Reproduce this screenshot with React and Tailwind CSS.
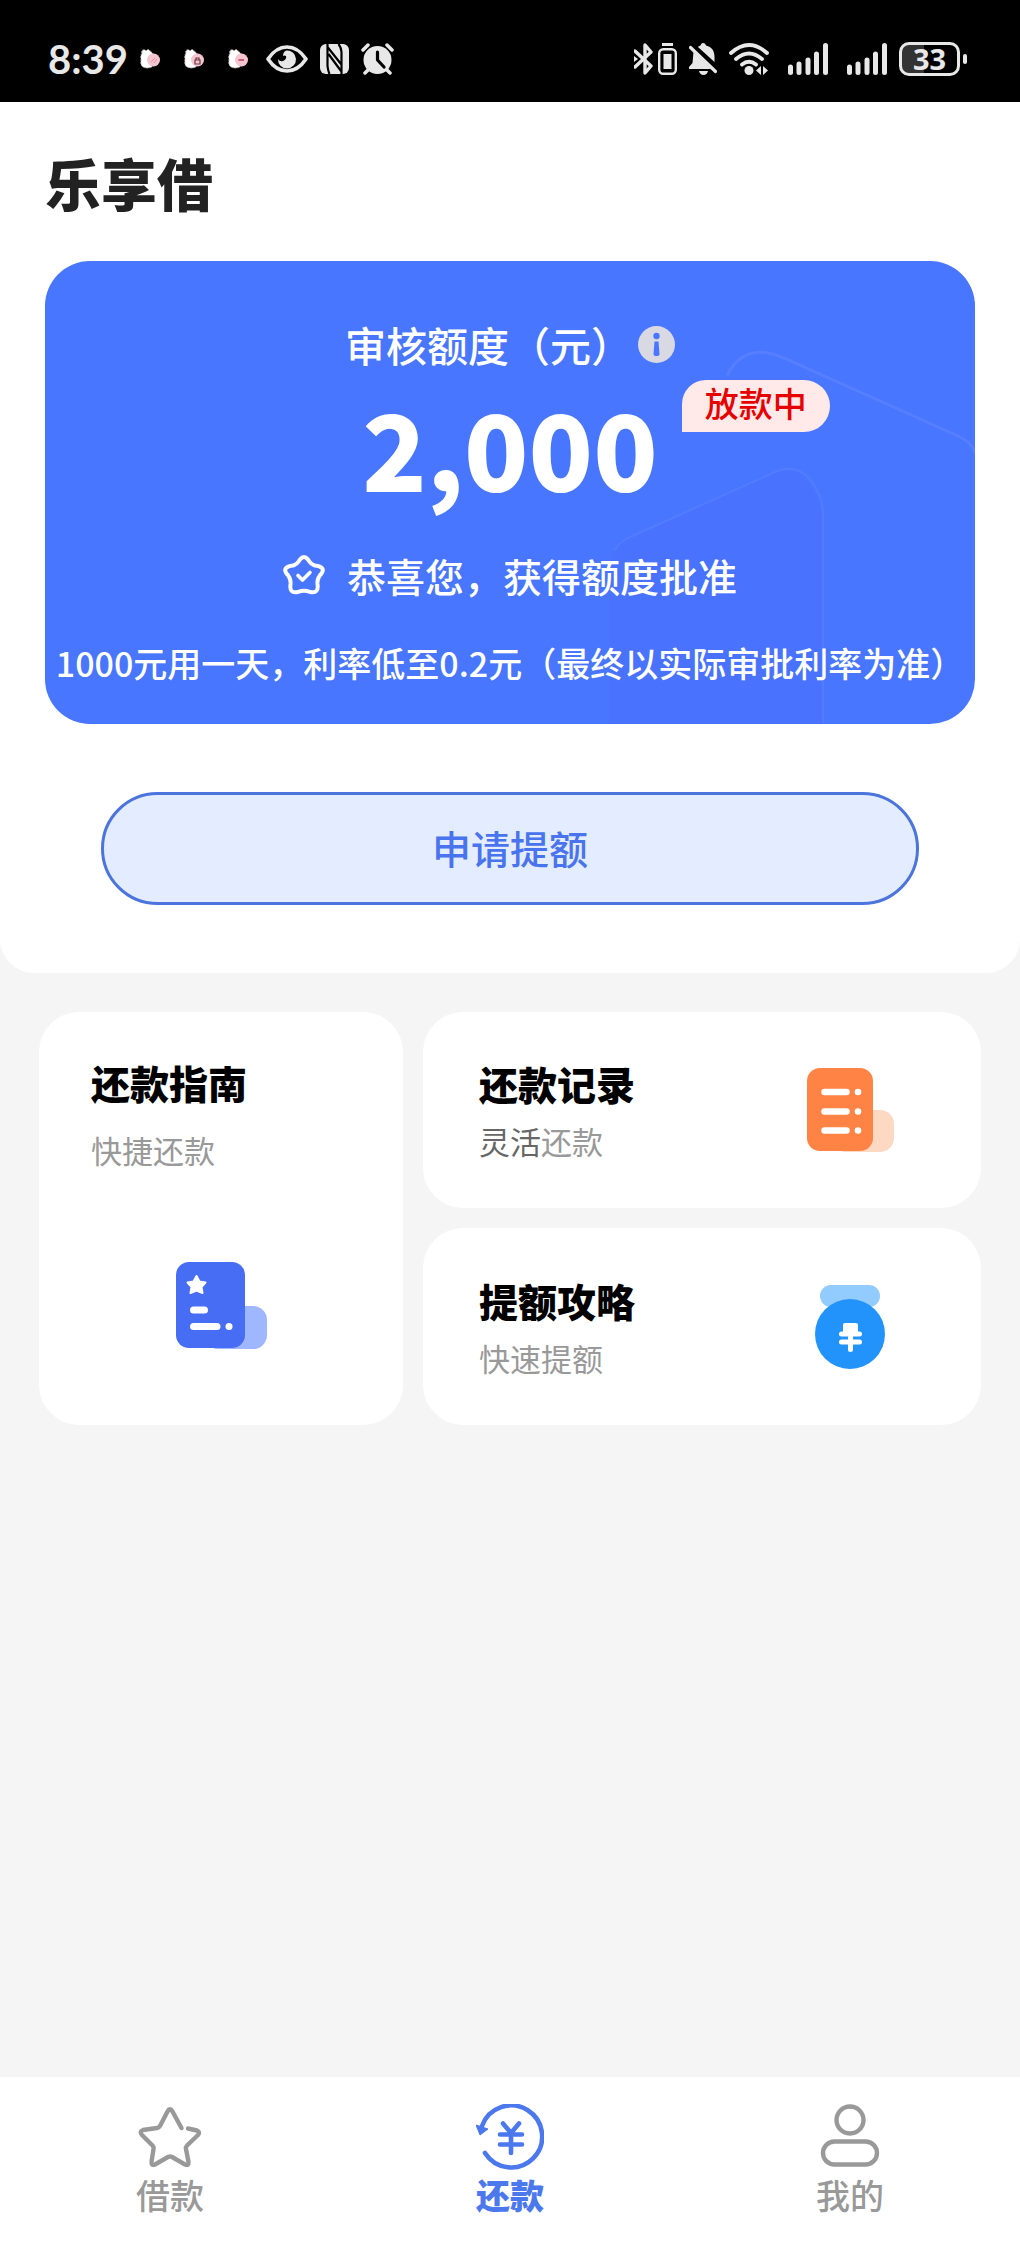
import React, { useState } from 'react'

const Sticker = ({ mark }) => (
  <svg className="w-5 h-6" viewBox="0 0 20 24" aria-hidden="true">
    <path d="M2 6 Q1 4 3 3 Q5 2 6 4 Q8 1 10 4 Q12 5 13 7 L12 20 Q7 22 3 20 Q0 18 1 13 Q0 9 2 6 Z" fill="#fff" stroke="#b9a3a6" strokeWidth="1" strokeDasharray="2 1" />
    <circle cx="13.500" cy="13" r="6.500" fill="#f6c6d0" />
    {mark === 'lock' && <path d="M11 13h5v4h-5z M12 13v-2h3v2" fill="none" stroke="#6b3a46" strokeWidth="1.200" />}
    {mark === 'dash' && <path d="M10.500 13h5.500" stroke="#c0455f" strokeWidth="1.600" />}
    {mark === 'dots' && <path d="M11 15l4-4M14 16l3-4" stroke="#e58fa3" strokeWidth="1" />}
  </svg>
)

const EyeIcon = () => (
  <svg className="w-[42px] h-7" viewBox="0 0 42 28" aria-hidden="true">
    <path d="M2 14 C8 5 14 2 21 2 C28 2 34 5 40 14 C34 23 28 26 21 26 C14 26 8 23 2 14 Z" fill="none" stroke="#e8e8e8" strokeWidth="3.600" strokeLinejoin="round" />
    <path d="M20 5.500 A9 9 0 1 1 12 14 Q14 17 17 16 Q21 14 20 11 Q18 10 17 11 Q17 7 20 5.500 Z" fill="#e8e8e8" />
  </svg>
)

const NfcIcon = () => (
  <svg className="w-[29px] h-[30px]" viewBox="0 0 29 30" aria-hidden="true">
    <rect width="29" height="30" rx="6" fill="#e8e8e8" />
    <path d="M7.500 0 V22 Q8 27 9.500 30 M7.500 3 L21 20 M8.500 10 L21 27 M21.500 30 V8 Q21 3 18.500 0" fill="none" stroke="#000" strokeWidth="2.200" />
  </svg>
)

const AlarmIcon = () => (
  <svg className="w-[33px] h-8" viewBox="0 0 33 32" aria-hidden="true">
    <path d="M2 7 L7 2 M31 7 L26 2 M8 26 L4 30 M25 26 L29 30" stroke="#e8e8e8" strokeWidth="3.500" strokeLinecap="round" />
    <circle cx="16.500" cy="17" r="14" fill="#e8e8e8" />
    <path d="M16.500 9 V17 L23 24" fill="none" stroke="#000" strokeWidth="3.200" strokeLinecap="round" strokeLinejoin="round" />
  </svg>
)

const BluetoothIcon = () => (
  <svg className="w-5 h-8" viewBox="0 0 20 32" aria-hidden="true">
    <path d="M1 8 L17 23 L11 30 V2 L17 9 L1 24" fill="none" stroke="#e8e8e8" strokeWidth="3.400" strokeLinejoin="round" strokeLinecap="round" />
    <path d="M0 13 L4 16 L0 19 Z" fill="#e8e8e8" />
  </svg>
)

const DeviceBatteryIcon = () => (
  <svg className="w-[19px] h-8" viewBox="0 0 19 32" aria-hidden="true">
    <path d="M4 1.500 H15" stroke="#e8e8e8" strokeWidth="3" />
    <rect x="1.200" y="6.200" width="16.600" height="24.600" rx="4" fill="none" stroke="#e8e8e8" strokeWidth="2.400" />
    <rect x="5.500" y="11" width="8" height="15" fill="#e8e8e8" />
  </svg>
)

const MutedBellIcon = () => (
  <svg className="w-7 h-8" viewBox="0 0 28 32" aria-hidden="true">
    <path d="M14 0 C15.800 0 16.500 1 17 2.500 C23 4 25.500 8 25.500 14 V19 L9 4 C10 3 11 2.700 11.500 2.500 C12 1 12.500 0 14 0 Z" fill="#e8e8e8" />
    <path d="M4.500 9 L22 26 H0 V24 L3.500 20 Z" fill="#e8e8e8" />
    <path d="M10 28 H19 Q18 32 14.500 32 Q11 32 10 28 Z" fill="#e8e8e8" />
    <path d="M1.500 4.500 L26.500 28.500" stroke="#e8e8e8" strokeWidth="3.200" strokeLinecap="round" />
  </svg>
)

const WifiIcon = () => (
  <svg className="w-10 h-8" viewBox="0 0 40 32" aria-hidden="true">
    <path d="M2 10 Q20 -6 38 10 M7 16 Q20 5 33 16 M13 21.500 Q20 16 27 21.500" fill="none" stroke="#e8e8e8" strokeWidth="3.800" strokeLinecap="round" />
    <circle cx="20" cy="27.500" r="4.500" fill="#e8e8e8" />
    <path d="M32 23 V32 L27 27.500 Z M34 23 L39 27.500 L34 32 Z" fill="#e8e8e8" />
  </svg>
)

const SignalIcon = () => (
  <svg className="w-10 h-8" viewBox="0 0 40 32" aria-hidden="true">
    <path d="M2.500 24 V29.500 M11 21 V29.500 M20 17 V29.500 M28.500 11 V29.500 M37.500 2.500 V29.500" stroke="#e8e8e8" strokeWidth="5" strokeLinecap="round" />
  </svg>
)

const InfoIcon = () => (
  <svg className="w-[37px] h-[37px]" viewBox="0 0 37 37" aria-hidden="true">
    <circle cx="18.500" cy="18.500" r="18.500" fill="#d9d9e3" />
    <circle cx="18.500" cy="10" r="3.200" fill="#4876ff" />
    <path d="M16.500 15.500 H20.500 L21.500 28 Q21.500 30 18.500 30 Q15.500 30 15.500 28 Z" fill="#4876ff" />
  </svg>
)

const BadgeStarIcon = () => (
  <svg className="w-[42px] h-10" viewBox="0 0 42 40" fill="none" stroke="#fff" aria-hidden="true">
    <path d="M17 4.500 Q21 -0.500 25 4.500 Q28 9.500 32 10.500 Q43 12 38.500 18.500 Q34 23 34.500 29 Q36 39 27 37 Q21 34.500 15 37 Q6 39 7.500 29 Q8 23 3.500 18.500 Q-1 12 10 10.500 Q14 9.500 17 4.500 Z" strokeWidth="4" strokeLinejoin="round" />
    <path d="M15 20.500 L19.500 25 L27 17.500" strokeWidth="3.600" strokeLinecap="round" strokeLinejoin="round" />
  </svg>
)

const GuideIcon = () => (
  <svg className="w-[91px] h-[87px]" viewBox="0 0 91 87" aria-hidden="true">
    <rect x="28" y="44" width="63" height="43" rx="14" fill="#9fb7ff" />
    <rect width="69" height="86" rx="13" fill="#486df5" />
    <path d="M20.500 14 L23.500 19.500 L29.500 20.500 L25.500 25 L26.500 31 L20.500 28.500 L14.500 31 L15.500 25 L11.500 20.500 L17.500 19.500 Z" fill="#fff" stroke="#fff" strokeWidth="2" strokeLinejoin="round" />
    <path d="M17.500 48 H28.500 M17.500 64.500 H41" stroke="#fff" strokeWidth="7" strokeLinecap="round" />
    <circle cx="53" cy="64.500" r="3.500" fill="#fff" />
  </svg>
)

const RecordIcon = () => (
  <svg className="w-[87px] h-[84px]" viewBox="0 0 87 84" aria-hidden="true">
    <rect x="25" y="42" width="62" height="42" rx="14" fill="#fdd9c4" />
    <rect width="66" height="83" rx="13" fill="#ff8345" />
    <path d="M17.500 24 H39.500 M17.500 43.500 H39.500 M17.500 62.500 H39.500" stroke="#fff" strokeWidth="6.500" strokeLinecap="round" />
    <circle cx="51" cy="24" r="3.300" fill="#fff" />
    <circle cx="51" cy="43.500" r="3.300" fill="#fff" />
    <circle cx="51" cy="62.500" r="3.300" fill="#fff" />
  </svg>
)

const MedalIcon = () => (
  <svg className="w-[70px] h-[84px]" viewBox="0 0 70 84" aria-hidden="true">
    <rect x="5" y="0" width="60" height="22" rx="11" fill="#92cbfd" />
    <circle cx="35" cy="49" r="35" fill="#2293fb" />
    <path d="M30 40 H41 V49 H30 Z" fill="#fff" stroke="#fff" strokeWidth="4" strokeLinejoin="round" />
    <path d="M26.500 49 H44.500 M26.500 57 H44.500 M35.500 49 V64.500" stroke="#fff" strokeWidth="5" strokeLinecap="round" />
  </svg>
)

const StarTabIcon = () => (
  <svg className="w-[68px] h-[68px]" viewBox="0 0 68 68" aria-hidden="true">
    <path d="M45.500 24 L36.500 7.500 Q34 3 31.500 7.500 L24 22 Q23 23.500 21 24 L7 26 Q3 27.500 6 31 L16.500 41.500 Q18 43 17.500 45 L15.500 58 Q15.500 62 19 60.500 L32 53 Q34 52 36 53 L49 60.500 Q53 62 52.500 58 L50 45 Q49.500 43 51 41.500 L62 31 Q64.500 28 61 26.500 L52 24.500" fill="none" stroke="#999" strokeWidth="4.400" strokeLinecap="round" strokeLinejoin="round" />
  </svg>
)

const RepayTabIcon = () => (
  <svg className="w-[68px] h-[68px]" viewBox="0 0 68 68" fill="none" stroke="#4c78ee" aria-hidden="true">
    <path d="M6 22 A31 31 0 1 1 9 49" strokeWidth="4.600" strokeLinecap="round" />
    <path d="M0 21 L12 25 L4 31 Z" fill="#4c78ee" strokeWidth="1" strokeLinejoin="round" />
    <path d="M27 19.500 L35 29 L43 19.500 M35 29 V49 M24 30.500 H46 M24 40.500 H46" strokeWidth="4.600" strokeLinecap="round" strokeLinejoin="round" />
  </svg>
)

const MineTabIcon = () => (
  <svg className="w-[68px] h-[68px]" viewBox="0 0 68 68" fill="none" stroke="#999" strokeWidth="4.400" aria-hidden="true">
    <circle cx="34" cy="16" r="13.500" />
    <rect x="7" y="37.500" width="54" height="23" rx="11.500" />
  </svg>
)

const tabs = [
  { id: 'borrow', name: '借款', icon: <StarTabIcon /> },
  { id: 'repay', name: '还款', icon: <RepayTabIcon /> },
  { id: 'mine', name: '我的', icon: <MineTabIcon /> }
]

const StatusBar = () => (
  <div className="h-[102px] pt-4 pl-12 pr-[53px] flex items-center justify-between bg-black text-[#e8e8e8]">
    <div className="flex items-center">
      <span className="font-['Lato'] font-bold text-[40px] leading-[48px]">8:39</span>
      <div className="flex items-center gap-6 ml-3 mr-[18px]">
        <Sticker mark="dots" />
        <Sticker mark="lock" />
        <Sticker mark="dash" />
      </div>
      <div className="flex items-center gap-3">
        <EyeIcon />
        <NfcIcon />
        <AlarmIcon />
      </div>
    </div>
    <div className="flex items-center">
      <BluetoothIcon />
      <div className="flex items-center gap-3 ml-1">
        <DeviceBatteryIcon />
        <MutedBellIcon />
        <WifiIcon />
      </div>
      <div className="flex items-center gap-[19px] ml-[19px] mr-3">
        <SignalIcon />
        <SignalIcon />
      </div>
      <div className="w-[61px] h-[34px] flex items-center justify-center rounded-[10px] border-[3px] border-[#e8e8e8] bg-linear-to-r from-[#333] from-40% to-black to-40% font-['Open_Sans'] font-bold text-[29px] leading-7">
        33
      </div>
      <div className="w-1 h-[10px] ml-[3px] rounded-full bg-[#e8e8e8]"></div>
    </div>
  </div>
)

const App = () => {
  const [activeTab, setActiveTab] = useState('repay')

  return (
    <div className="min-h-screen flex flex-col bg-[#f5f5f5] font-['Noto_Sans_CJK_SC',sans-serif] text-black">
      <StatusBar />

      {/* Credit summary */}
      <section className="px-[45px] pt-10 pb-[68px] bg-white rounded-b-[34px]">
        <h1 className="text-[56px] leading-[80px] font-black text-[#222]">乐享借</h1>

        <div className="relative overflow-hidden mt-[39px] pt-[53px] pb-[37px] rounded-[45px] bg-[#4876ff] text-white text-center">
          <svg className="absolute right-0 top-0 w-[380px] h-full" viewBox="0 0 380 462" fill="none" aria-hidden="true">
            <path d="M14 462 V310 Q14 288 30 278 L179 211 Q210 198 228 251 V462 Z" fill="#4c70ff" opacity="0.35" />
            <path d="M20 289 Q22 283 32 277 L179 211 Q208 198 223 231 Q228 240 228 255 V462" stroke="#6488ff" strokeWidth="2" opacity="0.4" />
            <path d="M132 114 Q145 88 170 91 Q178 92 190 97 L362 174 Q378 181 380 192" stroke="#6488ff" strokeWidth="3" opacity="0.5" />
          </svg>

          <div className="relative flex flex-col items-center">
            <div className="flex items-center gap-[6px]">
              <span className="text-[41px] leading-[60px] font-medium">审核额度（元）</span>
              <button aria-label="额度说明">
                <InfoIcon />
              </button>
            </div>

            <div className="relative mt-[6px]">
              <span className="block text-[106px] leading-[132px] font-black">2,000</span>
              <span className="absolute left-full top-0 ml-6 px-[23px] rounded-tl-3xl rounded-r-[26px] bg-[#ffe9e9] text-[#e60000] text-[34px] leading-[46px] pb-[6px] font-medium whitespace-nowrap">
                放款中
              </span>
            </div>

            <div className="flex items-center gap-[22px] mt-[35px]">
              <BadgeStarIcon />
              <span className="text-[39px] leading-[56px] font-medium">恭喜您，获得额度批准</span>
            </div>

            <p className="mt-9 text-[34px] leading-[48px] font-medium whitespace-nowrap">
              1000元用一天，利率低至0.2元（最终以实际审批利率为准）
            </p>
          </div>
        </div>

        <div className="px-14 mt-[68px]">
          <button className="w-full h-[113px] pb-1 rounded-full border-[3px] border-[#4b74dd] bg-[#e3edff] text-[#4a74ee] text-[39px] leading-[56px] font-medium">
            申请提额
          </button>
        </div>
      </section>

      {/* Shortcuts */}
      <section className="grid grid-cols-[364fr_558fr] gap-5 px-[39px] mt-[39px]">
        <a href="#guide" className="row-span-2 flex flex-col px-[52px] pt-[42px] pb-[76px] rounded-[40px] bg-white">
          <h2 className="text-[39px] leading-[56px] font-black">还款指南</h2>
          <p className="mt-4 text-[31px] leading-[48px] text-[#999]">快捷还款</p>
          <div className="mt-auto flex justify-center">
            <GuideIcon />
          </div>
        </a>

        <a href="#records" className="h-[196px] flex items-center justify-between pl-14 pr-[87px] rounded-[40px] bg-white">
          <div>
            <h2 className="text-[39px] leading-[56px] font-black">还款记录</h2>
            <p className="mt-[6px] text-[31px] leading-[48px] text-[#999]"><span className="text-[#666]">灵活</span>还款</p>
          </div>
          <RecordIcon />
        </a>

        <a href="#tips" className="h-[197px] flex items-center justify-between pl-14 pr-24 rounded-[40px] bg-white">
          <div>
            <h2 className="text-[39px] leading-[56px] font-black">提额攻略</h2>
            <p className="mt-[6px] text-[31px] leading-[48px] text-[#999]">快速提额</p>
          </div>
          <MedalIcon />
        </a>
      </section>

      {/* Tab bar */}
      <nav className="mt-auto grid grid-cols-3 pt-[27px] pb-8 bg-white">
        {tabs.map((tab) => (
          <button
            key={tab.id}
            onClick={() => setActiveTab(tab.id)}
            className={`flex flex-col items-center text-[34px] leading-[46px] ${
              activeTab === tab.id ? 'font-black text-[#4c78ee]' : 'font-medium text-[#999]'
            }`}
          >
            {tab.icon}
            {tab.name}
          </button>
        ))}
      </nav>
    </div>
  )
}

export default App
